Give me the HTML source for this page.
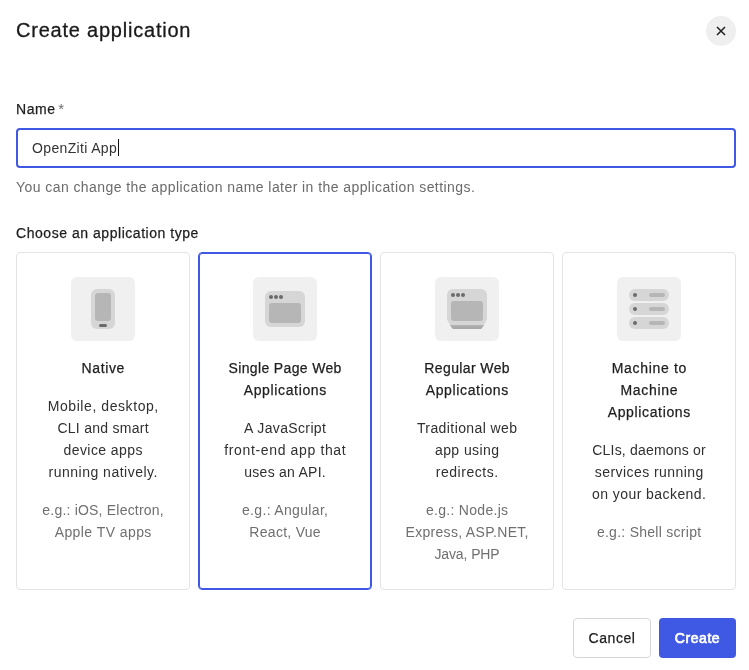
<!DOCTYPE html>
<html><head><meta charset="utf-8">
<style>
*{box-sizing:border-box;margin:0;padding:0}
html,body{width:749px;height:670px;background:#fff;overflow:hidden}
body{font-family:"Liberation Sans",sans-serif;color:#1e212a;position:relative}
.abs{position:absolute;white-space:nowrap}
svg{display:block}
#wrap{position:absolute;left:0;top:0;width:749px;height:670px;will-change:transform}
#title{left:16px;top:16px;font-size:20px;line-height:28px;color:#191919;letter-spacing:0.78px;-webkit-text-stroke:0.3px #191919}
#close{left:706px;top:16px;width:30px;height:30px;border-radius:50%;background:#efefef}
#lbl{left:16px;top:100px;font-size:14px;line-height:18px;color:#1e1e1e}
#lbl b{font-weight:normal;letter-spacing:0.53px;-webkit-text-stroke:0.25px #1e1e1e}
#lbl i{font-style:normal;color:#6b6b6b;font-size:15px;margin-left:-1px}
#input{left:16px;top:128px;width:720px;height:40px;border:2px solid #3f59e4;border-radius:4px}
#inval{left:32px;top:139px;font-size:14px;line-height:18px;color:#333;letter-spacing:0.35px}
#cursor{left:118px;top:139px;width:1px;height:17px;background:#111}
#help{left:16px;top:178px;font-size:14px;line-height:18px;color:#6b6b6b;letter-spacing:0.43px}
#choose{left:16px;top:224px;font-size:14px;line-height:18px;color:#1e1e1e;letter-spacing:0.54px;-webkit-text-stroke:0.25px #1e1e1e}
.card{position:absolute;top:252px;width:174px;height:338px;border:1px solid #e3e3e3;border-radius:4px;text-align:center}
.card.sel{border-color:#3f59e4;box-shadow:inset 0 0 0 1px #3f59e4}
.ic{position:absolute;left:54px;top:24px;width:64px;height:64px;border-radius:6px;background:#f0f0f0}
.tx{position:absolute;left:0;right:0;top:104px;font-size:14px;line-height:22px;white-space:nowrap}
.t{color:#1e1e1e;-webkit-text-stroke:0.25px #1e1e1e}
.d{color:#303030;margin-top:16px}
.e{color:#6f6f6f;margin-top:16px}
#cancel{left:573px;top:618px;width:78px;height:40px;border:1px solid #d6d6d6;border-radius:4px;font-size:14px;line-height:38px;text-align:center;color:#1e1e1e;letter-spacing:0.58px;-webkit-text-stroke:0.25px #1e1e1e}
#create{left:659px;top:618px;width:77px;height:40px;border-radius:4px;background:#3f59e4;font-size:14px;line-height:40px;text-align:center;color:#fff;letter-spacing:0.58px;-webkit-text-stroke:0.7px #fff}
</style></head><body><div id="wrap">
<div id="title" class="abs">Create application</div>
<div id="close" class="abs"><svg width="30" height="30" viewBox="0 0 30 30"><path d="M11 11L19 19M19 11L11 19" stroke="#1e1e1e" stroke-width="1.5"/></svg></div>
<div id="lbl" class="abs"><b>Name</b> <i>*</i></div>
<div id="input" class="abs"></div>
<div id="inval" class="abs">OpenZiti App</div>
<div id="cursor" class="abs"></div>
<div id="help" class="abs">You can change the application name later in the application settings.</div>
<div id="choose" class="abs">Choose an application type</div>
<div class="card" style="left:16px"><div class="ic"><svg width="64" height="64" viewBox="0 0 64 64"><rect x="20" y="12" width="24" height="40" rx="6" fill="#d6d6d6"/><rect x="24" y="16" width="16" height="28" rx="3" fill="#b6b6b6"/><rect x="28" y="47" width="8" height="3" rx="1.5" fill="#6b6b6b"/></svg></div>
<div class="tx"><div class="t"><div style="letter-spacing:0.62px;margin-right:-0.62px">Native</div></div><div class="d"><div style="letter-spacing:0.57px;margin-right:-0.57px">Mobile, desktop,</div><div style="letter-spacing:0.27px;margin-right:-0.27px">CLI and smart</div><div style="letter-spacing:0.43px;margin-right:-0.43px">device apps</div><div style="letter-spacing:0.49px;margin-right:-0.49px">running natively.</div></div><div class="e"><div style="letter-spacing:0.2px;margin-right:-0.2px">e.g.: iOS, Electron,</div><div style="letter-spacing:0.43px;margin-right:-0.43px">Apple TV apps</div></div></div></div>
<div class="card sel" style="left:198px"><div class="ic"><svg width="64" height="64" viewBox="0 0 64 64"><rect x="12" y="14" width="40" height="36" rx="6" fill="#d6d6d6"/><circle cx="18" cy="20" r="2" fill="#6b6b6b"/><circle cx="23" cy="20" r="2" fill="#6b6b6b"/><circle cx="28" cy="20" r="2" fill="#6b6b6b"/><rect x="16" y="26" width="32" height="20" rx="3" fill="#b6b6b6"/></svg></div>
<div class="tx"><div class="t"><div style="letter-spacing:0.35px;margin-right:-0.35px">Single Page Web</div><div style="letter-spacing:0.64px;margin-right:-0.64px">Applications</div></div><div class="d"><div style="letter-spacing:0.36px;margin-right:-0.36px">A JavaScript</div><div style="letter-spacing:0.64px;margin-right:-0.64px">front-end app that</div><div style="letter-spacing:0.25px;margin-right:-0.25px">uses an API.</div></div><div class="e"><div style="letter-spacing:0.33px;margin-right:-0.33px">e.g.: Angular,</div><div style="letter-spacing:0.28px;margin-right:-0.28px">React, Vue</div></div></div></div>
<div class="card" style="left:380px"><div class="ic"><svg width="64" height="64" viewBox="0 0 64 64"><path d="M18 12H46A6 6 0 0 1 52 18V42.5L46.8 51.2Q46.2 52 45.2 52H18.8Q17.8 52 17.2 51.2L12 42.5V18A6 6 0 0 1 18 12Z" fill="#d6d6d6"/><path d="M15.1 48H48.9L46.8 51.2Q46.2 52 45.2 52H18.8Q17.8 52 17.2 51.2Z" fill="#a8a8a8"/><path d="M15.1 48H48.9L47.8 49.6H16.2Z" fill="#b2b2b2"/><circle cx="18" cy="18" r="2" fill="#6b6b6b"/><circle cx="23" cy="18" r="2" fill="#6b6b6b"/><circle cx="28" cy="18" r="2" fill="#6b6b6b"/><rect x="16" y="24" width="32" height="20" rx="3" fill="#b6b6b6"/></svg></div>
<div class="tx"><div class="t"><div style="letter-spacing:0.38px;margin-right:-0.38px">Regular Web</div><div style="letter-spacing:0.64px;margin-right:-0.64px">Applications</div></div><div class="d"><div style="letter-spacing:0.41px;margin-right:-0.41px">Traditional web</div><div style="letter-spacing:0.42px;margin-right:-0.42px">app using</div><div style="letter-spacing:0.54px;margin-right:-0.54px">redirects.</div></div><div class="e"><div style="letter-spacing:0.3px;margin-right:-0.3px">e.g.: Node.js</div><div style="letter-spacing:0.31px;margin-right:-0.31px">Express, ASP.NET,</div><div style="letter-spacing:-0.1px;margin-right:--0.1px">Java, PHP</div></div></div></div>
<div class="card" style="left:562px"><div class="ic"><svg width="64" height="64" viewBox="0 0 64 64"><rect x="12" y="12" width="40" height="12" rx="6" fill="#d6d6d6"/><rect x="12" y="26" width="40" height="12" rx="6" fill="#d6d6d6"/><rect x="12" y="40" width="40" height="12" rx="6" fill="#d6d6d6"/><circle cx="18" cy="18" r="2" fill="#6b6b6b"/><circle cx="18" cy="32" r="2" fill="#6b6b6b"/><circle cx="18" cy="46" r="2" fill="#6b6b6b"/><rect x="32" y="16" width="16" height="4" rx="2" fill="#b6b6b6"/><rect x="32" y="30" width="16" height="4" rx="2" fill="#b6b6b6"/><rect x="32" y="44" width="16" height="4" rx="2" fill="#b6b6b6"/></svg></div>
<div class="tx"><div class="t"><div style="letter-spacing:0.68px;margin-right:-0.68px">Machine to</div><div style="letter-spacing:0.72px;margin-right:-0.72px">Machine</div><div style="letter-spacing:0.64px;margin-right:-0.64px">Applications</div></div><div class="d"><div style="letter-spacing:0.19px;margin-right:-0.19px">CLIs, daemons or</div><div style="letter-spacing:0.44px;margin-right:-0.44px">services running</div><div style="letter-spacing:0.43px;margin-right:-0.43px">on your backend.</div></div><div class="e"><div style="letter-spacing:0.27px;margin-right:-0.27px">e.g.: Shell script</div></div></div></div>

<div id="cancel" class="abs">Cancel</div>
<div id="create" class="abs">Create</div>
</div></body></html>
